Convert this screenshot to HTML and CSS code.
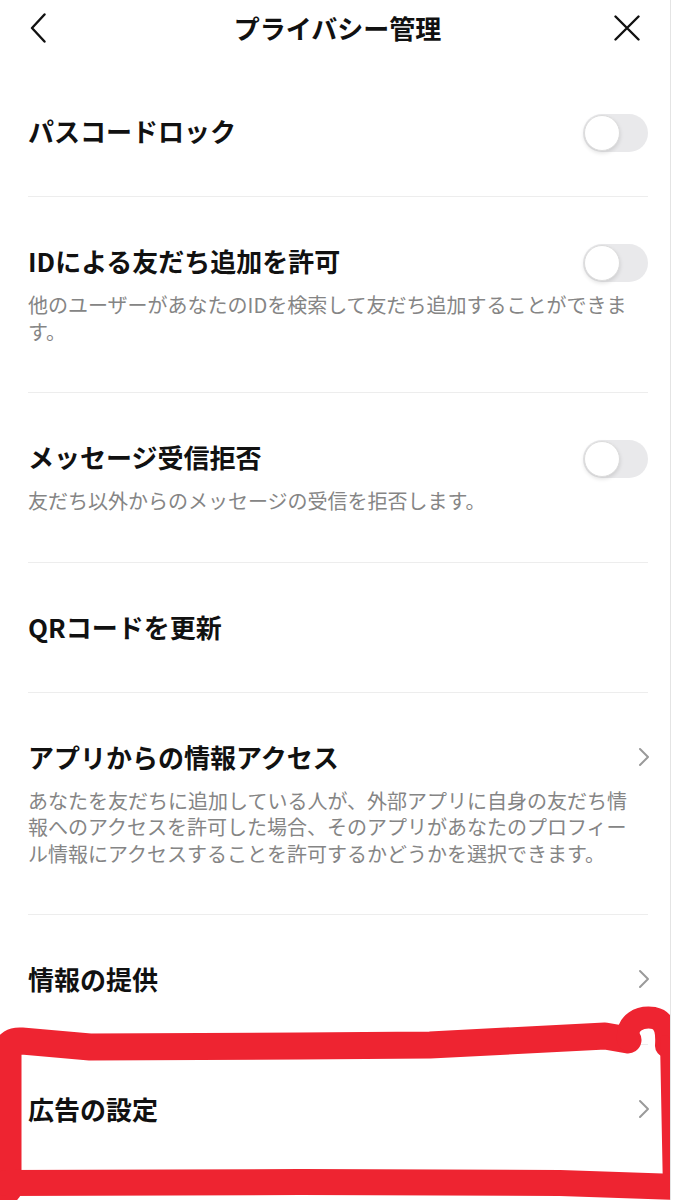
FILE: index.html
```html
<!DOCTYPE html>
<html lang="ja">
<head>
<meta charset="utf-8">
<title>プライバシー管理</title>
<link rel="stylesheet" href="styles.css">
</head>
<body>
<div class="screen">
  <header class="topbar">
    <svg class="icon-back" viewBox="0 0 16 30" width="16" height="30"><path d="M14.5 1.5 L2 15 L14.5 28.5" fill="none" stroke="#111" stroke-width="2.4" stroke-linecap="round" stroke-linejoin="round"/></svg>
    <h1 class="title">プライバシー管理</h1>
    <svg class="icon-close" viewBox="0 0 26 26" width="26" height="26"><path d="M1.5 1.5 L24.5 24.5 M24.5 1.5 L1.5 24.5" fill="none" stroke="#111" stroke-width="2.4" stroke-linecap="round"/></svg>
  </header>

  <ul class="list">
    <li class="row first">
      <div class="row-head"><span class="label">パスコードロック</span><span class="toggle"><span class="knob"></span></span></div>
    </li>
    <li class="row">
      <div class="row-head"><span class="label">IDによる友だち追加を許可</span><span class="toggle"><span class="knob"></span></span></div>
      <p class="desc">他のユーザーがあなたのIDを検索して友だち追加することができます。</p>
    </li>
    <li class="row">
      <div class="row-head"><span class="label">メッセージ受信拒否</span><span class="toggle"><span class="knob"></span></span></div>
      <p class="desc">友だち以外からのメッセージの受信を拒否します。</p>
    </li>
    <li class="row">
      <div class="row-head"><span class="label">QRコードを更新</span></div>
    </li>
    <li class="row">
      <div class="row-head"><span class="label">アプリからの情報アクセス</span><svg class="chev" viewBox="0 0 12 20" width="12" height="20"><path d="M2 2 L10 10 L2 18" fill="none" stroke="#9a9a9a" stroke-width="2" stroke-linecap="round" stroke-linejoin="round"/></svg></div>
      <p class="desc">あなたを友だちに追加している人が、外部アプリに自身の友だち情報へのアクセスを許可した場合、そのアプリがあなたのプロフィール情報にアクセスすることを許可するかどうかを選択できます。</p>
    </li>
    <li class="row">
      <div class="row-head"><span class="label">情報の提供</span><svg class="chev" viewBox="0 0 12 20" width="12" height="20"><path d="M2 2 L10 10 L2 18" fill="none" stroke="#9a9a9a" stroke-width="2" stroke-linecap="round" stroke-linejoin="round"/></svg></div>
    </li>
    <li class="row">
      <div class="row-head"><span class="label">広告の設定</span><svg class="chev" viewBox="0 0 12 20" width="12" height="20"><path d="M2 2 L10 10 L2 18" fill="none" stroke="#9a9a9a" stroke-width="2" stroke-linecap="round" stroke-linejoin="round"/></svg></div>
    </li>
  </ul>

  <svg class="marker" viewBox="0 0 676 1200" width="676" height="1200">
    <g fill="none" stroke="#ee2431" stroke-linecap="round" stroke-linejoin="round">
      <path d="M8 1190 L8 1050 Q8 1040 22 1041 L90 1047 L300 1046 L430 1045 L605 1036 L628 1040" stroke-width="27"/>
      <path d="M628 1040 C626 1022 640 1016 654 1018 C664 1020 667 1030 666 1046" stroke-width="22"/>
      <path d="M665 1040 L668 1192" stroke-width="10"/>
      <path d="M6 1183 L300 1182 L560 1183 L676 1187" stroke-width="26"/>
    </g>
  </svg>
</div>
</body>
</html>
```

FILE: styles.css
```css
* { box-sizing: border-box; }

html, body {
  margin: 0;
  padding: 0;
  background: #fff;
}

body {
  font-family: "Noto Sans CJK JP", "Noto Sans", sans-serif;
  color: #111;
}

.screen {
  position: relative;
  width: 671px;
  min-height: 1200px;
  border-right: 1px solid #e4e4e4;
  overflow: hidden;
}

.topbar {
  height: 56px;
  display: grid;
  grid-template-columns: 1fr auto 1fr;
  align-items: center;
  padding: 0 30px 0 30px;
}

.title {
  margin: 0;
  padding-left: 5px;
  font-size: 26px;
  font-weight: 700;
  line-height: 36px;
  color: #111;
}

.icon-back, .icon-close { display: block; }
.icon-close { justify-self: end; }

.list {
  list-style: none;
  margin: 11px 0 0;
  padding: 0 22px 0 28px;
}

.row {
  padding: 46px 0 47px;
  border-bottom: 1px solid #ededed;
}

.row-head {
  display: flex;
  align-items: center;
  justify-content: space-between;
  height: 36px;
}

.label {
  font-size: 26px;
  font-weight: 700;
  line-height: 36px;
  color: #111;
}

.desc {
  margin: 13px 0 0;
  padding-right: 8px;
  font-size: 20px;
  line-height: 26.5px;
  color: #858585;
}

.toggle {
  position: relative;
  width: 65px;
  height: 38px;
  border-radius: 19px;
  background: #e9e9eb;
  flex: none;
  margin-top: 4px;
}

.knob {
  position: absolute;
  left: 1px;
  top: 1px;
  width: 36px;
  height: 36px;
  border-radius: 50%;
  background: #fff;
  border: 1px solid #dcdcdc;
  box-shadow: 0 2px 4px rgba(0,0,0,0.12);
}

.chev {
  display: block;
  margin-right: -2px;
  flex: none;
}

.marker {
  position: absolute;
  left: 0;
  top: 0;
  pointer-events: none;
}
```
